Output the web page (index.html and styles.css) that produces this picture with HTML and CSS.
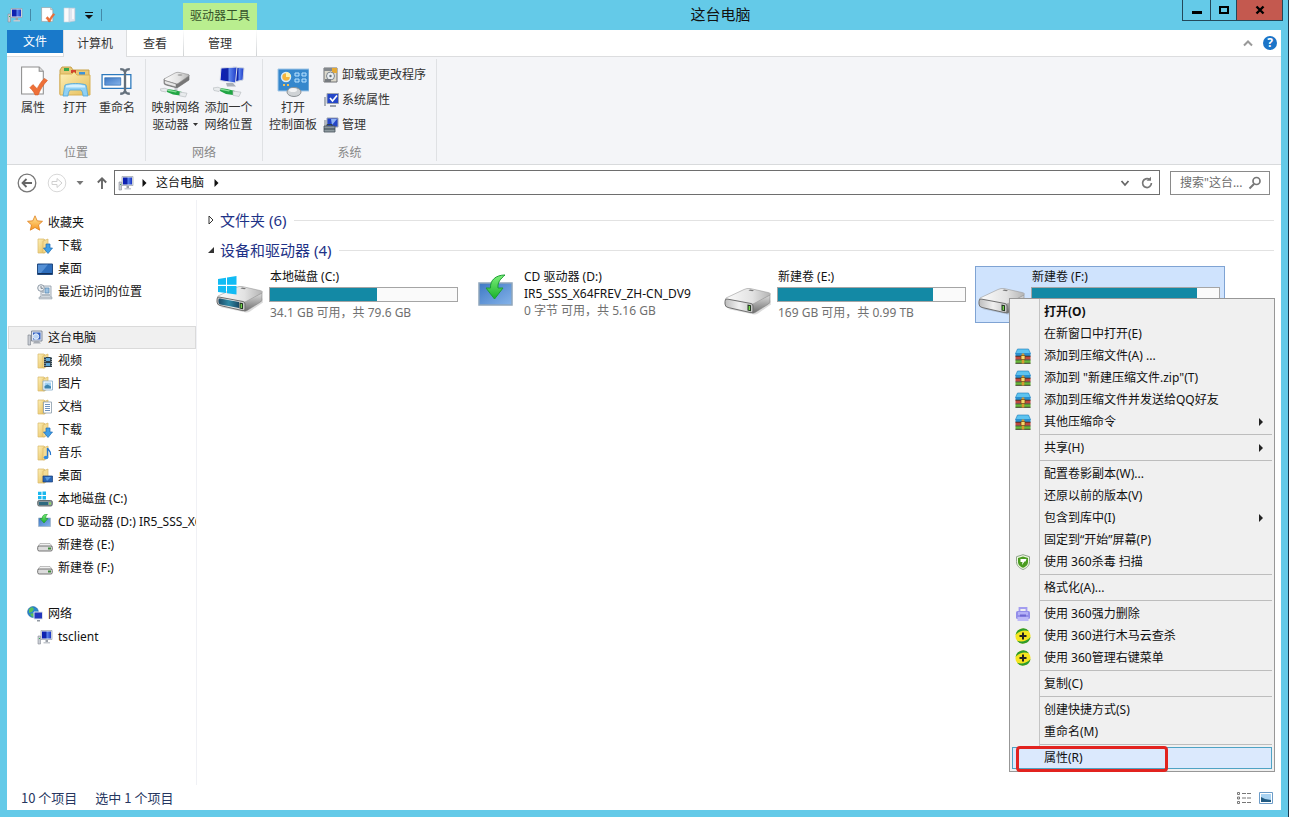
FILE: index.html
```html
<!DOCTYPE html>
<html lang="zh-CN">
<head>
<meta charset="utf-8">
<title>这台电脑</title>
<link rel="stylesheet" href="styles.css">
</head>
<body>
<svg class="sprite" aria-hidden="true">
  <defs>
    <linearGradient id="g-screen" x1="0" y1="0" x2="1" y2="0"><stop offset="0" stop-color="#0a1fb8"/><stop offset=".45" stop-color="#1024a8"/><stop offset=".55" stop-color="#5c86ee"/><stop offset="1" stop-color="#1a35c4"/></linearGradient>
    <linearGradient id="g-folder" x1="0" y1="0" x2="1" y2="1"><stop offset="0" stop-color="#fdf0b8"/><stop offset="1" stop-color="#e6bd58"/></linearGradient>
    <linearGradient id="g-metal" x1="0" y1="0" x2="1" y2="0"><stop offset="0" stop-color="#fbfbfb"/><stop offset=".6" stop-color="#e2e2e2"/><stop offset="1" stop-color="#b4b4b4"/></linearGradient>
    <linearGradient id="g-side" x1="0" y1="0" x2="0" y2="1"><stop offset="0" stop-color="#dcdcdc"/><stop offset="1" stop-color="#6e6e6e"/></linearGradient>
    <linearGradient id="g-face" x1="0" y1="0" x2="1" y2="0"><stop offset="0" stop-color="#bdbdbd"/><stop offset=".5" stop-color="#f0f0f0"/><stop offset="1" stop-color="#c4c4c4"/></linearGradient>
    <linearGradient id="g-glass" x1="0" y1="0" x2="1" y2="0"><stop offset="0" stop-color="#1c4a66"/><stop offset=".5" stop-color="#2f8aa6"/><stop offset="1" stop-color="#1c4a66"/></linearGradient>
    <linearGradient id="g-blue" x1="0" y1="0" x2="1" y2="1"><stop offset="0" stop-color="#3d78c4"/><stop offset="1" stop-color="#86b4ea"/></linearGradient>
    <linearGradient id="g-green" x1="0" y1="0" x2="0" y2="1"><stop offset="0" stop-color="#7df07a"/><stop offset="1" stop-color="#18b02a"/></linearGradient>
    <linearGradient id="g-star" x1="0" y1="0" x2="0" y2="1"><stop offset="0" stop-color="#ffe9a0"/><stop offset="1" stop-color="#f7941e"/></linearGradient>
  </defs>
  <symbol id="i-pc" viewBox="0 0 16 16"><path d="M1 7h2.500v8H1z" fill="#c9cdd4" stroke="#8a8f98" stroke-width=".6"/><path d="M2 9h1v1H2z" fill="#3aa655"/><path d="M4 1.500h11v9H4z" fill="#e4e7ec" stroke="#9aa0aa" stroke-width=".7"/><path d="M5 2.500h9v7H5z" fill="url(#g-screen)"/><path d="M8.500 11h2.500v2H8.500z" fill="#9aa0a8"/><path d="M6.500 13h6.500v1.500H6.500z" fill="#c4c8ce"/></symbol>
  <symbol id="i-thispc" viewBox="0 0 16 16"><path d="M1 5h2.500v10H1z" fill="#c9cdd4" stroke="#777d88" stroke-width=".6"/><path d="M4.500 1h10.500v10H4.500z" fill="#dfe7f3" stroke="#6d7685" stroke-width=".8"/><path d="M6 2.500h7.500v7H6z" fill="#315fc0"/><circle cx="9" cy="6.500" r="2.700" fill="#b9d3f4" stroke="#e8f1fc"/><path d="M6 13.500l1.500-2.500h4l2.500 2.500z" fill="#a6abb3"/></symbol>
  <symbol id="i-page" viewBox="0 0 26 30"><path d="M1 1h17l4 4v22H1z" fill="#fff" stroke="#8d8d8d"/><path d="M18 1v4h4" fill="#ddd" stroke="#8d8d8d"/><path d="M9 21l3-3 4 4c2-4 4-7 7-10l3 2c-4 4-7 9-9 14h-3c-1-3-3-5-5-7z" fill="#ee7038" stroke="#d75a22" stroke-width=".6"/></symbol>
  <symbol id="i-blankfolder" viewBox="0 0 14 16"><path d="M1 1h5l1 1v13H1z" fill="#fafafa" stroke="#c7d3df" stroke-width=".6"/><path d="M6 1h6v13l-6 1z" fill="#dfe5ee" stroke="#b8c8d6" stroke-width=".6"/><path d="M9 2h2v10H9z" fill="#f5f7fa"/></symbol>
  <symbol id="i-openfolder" viewBox="0 0 32 32"><path d="M1 4l2-3h9l2 3h16v24H1z" fill="#e8c877" stroke="#c9a24a"/><path d="M5 2h5v3H5z" fill="#3aa84a"/><path d="M12 4h5v3h-5z" fill="#d2452f"/><path d="M20 6h6v3h-6z" fill="#3e93d8"/><path d="M1 8h12l2-2 3 3h13v20H1z" fill="url(#g-folder)" stroke="#d8b157"/><path d="M4 30c1-4 1-8 2-11 4-2 17-2 21 0 1 3 1 7 2 11h-5c0-3-1-5-2-6H11c-1 1-2 3-2 6z" fill="#8fd0f4" stroke="#4ea6d8" stroke-width=".8"/><path d="M7 19.500c5-1.500 14-1.500 19 0v2H7z" fill="#d6f1fd"/></symbol>
  <symbol id="i-rename" viewBox="0 0 30 28"><path d="M1 7h27v13H1z" fill="#fff" stroke="#2c79bd" stroke-width="1.200"/><path d="M3.500 10h15v7h-15z" fill="url(#g-blue)" stroke="#2467ae" stroke-width=".6"/><path d="M18 2c3 0 4 1 4.500 2.500C23 3 24 2 27 2M18 25c3 0 4-1 4.500-2.500C23 24 24 25 27 25M22.500 4v19" fill="none" stroke="#64707c" stroke-width="2.200"/></symbol>
  <symbol id="i-mapdrive" viewBox="0 0 32 32"><path d="M4 13v4q0 1.500 2 2l11 3 12-8V9z" fill="#777" stroke="#666" stroke-width=".6"/><path d="M4 13L15 7q2-1 4-.6l9 2q2 .6.500 1.800L18 17.500q-1 .6-2 .3L5 14.500z" fill="url(#g-metal)" stroke="#888" stroke-width=".6"/><path d="M4.500 14.500L16 18v3L6 18.300q-1.500-.5-1.500-2z" fill="#e7e7e7" stroke="#777" stroke-width=".5"/><ellipse cx="20" cy="9" rx="2.500" ry=".8" fill="#999"/><path d="M16 22v3" stroke="#c4c8cc" stroke-width="3"/><path d="M7 23l7 1 8 2-2 3.500-7-1-6-2.500z" fill="#21a544"/><path d="M8 23.500l9 2-1 1-8-1.500z" fill="#83dd94"/><path d="M0 23l5-.8 3 1.300L6 26l-5-1zM20 26l7 1.200-1.500 3.800-6-1.200z" fill="#e8ebed" stroke="#b1b7bb" stroke-width=".6"/></symbol>
  <symbol id="i-addnet" viewBox="0 0 32 32"><path d="M20 1l11 1-1 12-9 2z" fill="url(#g-screen)" stroke="#cfd6e2"/><path d="M8 2l16-1-1.500 16L7 14.500z" fill="url(#g-screen)" stroke="#dde2ea"/><path d="M13 17h7l3 3.500h-9z" fill="#a9b0b8"/><path d="M7 22l7 1 8 2-2 4-7-1-6-3z" fill="#21a544"/><path d="M8 22.500l9 2-1 1-8-1.500z" fill="#83dd94"/><path d="M0 22l5-.8 3 1.300L6 25.500 1 24.500zM20 25l8 1.200-2 4.300-6-1.200z" fill="#e8ebed" stroke="#b1b7bb" stroke-width=".6"/></symbol>
  <symbol id="i-cpanel" viewBox="0 0 32 30"><path d="M1 2h31v22H1z" fill="#3587cc" stroke="#a3c7e7"/><circle cx="9" cy="10" r="4.500" fill="#f4b53c" stroke="#d3ebff" stroke-width="1.500"/><path d="M9 10V5a5 5 0 0 1 5 5z" fill="#fff2a8"/><path d="M18 6h4v3h-4zM25 6h4v3h-4zM18 12h4v3h-4zM25 12h4v3h-4z" fill="#3d8fd6" stroke="#b9e2ff"/><path d="M6 18h2M10 18h2" stroke="#f1bf55" stroke-width="2"/><ellipse cx="17" cy="25" rx="7" ry="4.500" fill="#cfd3d6" stroke="#8d9397"/><ellipse cx="16" cy="23" rx="4" ry="2" fill="#f2f3f4"/></symbol>
  <symbol id="i-uninstall" viewBox="0 0 16 16"><path d="M1 1h13v14H1z" fill="#dcd9cc" stroke="#6f7174"/><path d="M1 1h13v3H1z" fill="#83888d"/><path d="M9 1h5v5H9z" fill="#e4a936"/><circle cx="7.500" cy="9" r="4" fill="#e8edf1" stroke="#7d858d"/><circle cx="7.500" cy="9" r="1.200" fill="#66717b"/><path d="M2 12h6v3H2z" fill="#777b80"/></symbol>
  <symbol id="i-sysprop" viewBox="0 0 16 16"><path d="M1 5h2v9H1z" fill="#aab0b8"/><path d="M4 1.500h11.500v10H4z" fill="#2446c8" stroke="#9da4b0"/><path d="M7 6l2.500 3L14 3.500" fill="none" stroke="#fff" stroke-width="1.700"/><path d="M7 13h6v2H7z" fill="#9ba1a9"/></symbol>
  <symbol id="i-manage" viewBox="0 0 16 16"><path d="M4 1h11v9H4z" fill="#2446c8" stroke="#9da4b0"/><path d="M1 3h3v6H1z" fill="#b2b7bd"/><path d="M8 2h6L9 8z" fill="#8fb2f3"/><path d="M1 9h11v6H1z" fill="#8c989e" stroke="#46525a" stroke-width=".8"/><path d="M4 9V7.500h5V9M1 12h11" fill="none" stroke="#33434c"/></symbol>
  <symbol id="i-star" viewBox="0 0 16 16"><path d="M8 .8l2.200 5 5.300.5-4 3.600 1.200 5.300L8 12.500l-4.700 2.700 1.200-5.300-4-3.600 5.300-.5z" fill="url(#g-star)" stroke="#dd7d1d" stroke-width=".8"/></symbol>
  <symbol id="i-folder" viewBox="0 0 16 16"><path d="M1 1h6l1 1v13H1z" fill="url(#g-folder)" stroke="#d9b868" stroke-width=".7"/><path d="M6 3l5-2v12l-5 2z" fill="#f4dc94" stroke="#d9b868" stroke-width=".7"/></symbol>
  <symbol id="i-download" viewBox="0 0 16 16"><use href="#i-folder"/><path d="M9 6h4v4h2.500L11 15.500 6.500 10H9z" fill="#3f9fe6" stroke="#1d6cb4" stroke-width=".7"/></symbol>
  <symbol id="i-video" viewBox="0 0 16 16"><use href="#i-folder"/><path d="M7 4h8v10H7z" fill="#2e3f4a"/><path d="M9 5h4v3H9zM9 10h4v3H9z" fill="#5ea6d6"/><path d="M8 4v10M14.300 4v10" stroke="#d9e2e6" stroke-dasharray="1 1" stroke-width=".8"/></symbol>
  <symbol id="i-image" viewBox="0 0 16 16"><use href="#i-folder"/><path d="M6 5h9.500v9H6z" fill="#fff" stroke="#83a9c9" stroke-width=".8"/><path d="M7.500 6.500h6.500v6H7.500z" fill="#9fd0f2"/><path d="M7.500 10l3-1.500 3.500 2v2H7.500z" fill="#3c83ae"/></symbol>
  <symbol id="i-doc" viewBox="0 0 16 16"><use href="#i-folder"/><path d="M6.500 3h8v11h-8z" fill="#fff" stroke="#889aa9" stroke-width=".8"/><path d="M8 5.500h5M8 7.500h5M8 9.500h5M8 11.500h5" stroke="#6f93bf"/></symbol>
  <symbol id="i-music" viewBox="0 0 16 16"><use href="#i-folder"/><path d="M10.500 12V3c1 3 4 3 3 7" fill="none" stroke="#2476cf" stroke-width="1.400"/><ellipse cx="9" cy="12.500" rx="2.300" ry="1.800" fill="#2f8be2"/></symbol>
  <symbol id="i-deskfolder" viewBox="0 0 16 16"><use href="#i-folder"/><path d="M6 8h9.500v6H6z" fill="#2965b4" stroke="#173e78" stroke-width=".7"/><path d="M8 9h6l-4 4z" fill="#5598df"/></symbol>
  <symbol id="i-desktop" viewBox="0 0 16 16"><path d="M.5 3h15v10.500H.5z" fill="#2d6dbc" stroke="#234b80"/><path d="M1 4l10-.5L4 12H1z" fill="#5590d5"/><path d="M1 12.500h14" stroke="#14315a"/></symbol>
  <symbol id="i-recent" viewBox="0 0 16 16"><path d="M4 2h10v12H2.500L4 12z" fill="#e9edf1" stroke="#8a98a5" stroke-width=".8"/><path d="M8 4h4v5H8z" fill="#9cc2e3" stroke="#5585ae" stroke-width=".7"/><path d="M5 11h8M5 8h2" stroke="#7d8b98"/><circle cx="4" cy="4" r="3.300" fill="#eef1f4" stroke="#8d99a5"/><path d="M4 2v2.300h2" fill="none" stroke="#5c6873" stroke-width=".8"/><path d="M2 13h13v2H2z" fill="#cbd0d5" stroke="#8a98a5" stroke-width=".5"/></symbol>
  <symbol id="i-drive-s" viewBox="0 0 16 16"><path d="M.8 9.500L3 6.500h10l2.300 3z" fill="#f0f0f0" stroke="#999" stroke-width=".6"/><rect x=".7" y="9" width="14.600" height="5" rx="1.500" fill="#dcdcdc" stroke="#666" stroke-width=".9"/><path d="M11 10.500h3v2h-3z" fill="#3c8a3a"/></symbol>
  <symbol id="i-win-s" viewBox="0 0 16 16"><rect x=".7" y="9.500" width="14.600" height="5.500" rx="1.500" fill="#8b979c" stroke="#5b6468" stroke-width=".9"/><path d="M2 11h9v3H2z" fill="#2e6b80"/><path d="M12 11.500h2v2h-2z" fill="#8de05c"/><path d="M1 .8h3.500v3.200H1zM5.500.5H9v3.500H5.500zM1 5h3.500v3.200H1zM5.500 5H9v3.500H5.500z" fill="#1ab7ee"/></symbol>
  <symbol id="i-cd-s" viewBox="0 0 16 16"><path d="M1.500 4h12v8.500h-12z" fill="url(#g-blue)" stroke="#9fb3c7" stroke-width=".7"/><path d="M10.500 0C7 0 5 2 5.200 4.500H3L7 9l4-4.500H8.700C8.500 2.500 9.500 1 10.500 0z" fill="url(#g-green)" stroke="#1c9430" stroke-width=".6"/></symbol>
  <symbol id="i-network" viewBox="0 0 16 16"><circle cx="6" cy="6" r="5.400" fill="#2a86cf" stroke="#1a619f" stroke-width=".6"/><path d="M2 3l3-2 2 2-2 3-3 1zM3 8l3-1 1 3-2 1z" fill="#59c159"/><path d="M7 6h8.500v7H7z" fill="#2337bd" stroke="#dde2ea"/><path d="M10 14h3v1.500h-3z" fill="#939aa3"/></symbol>
  <symbol id="i-drive" viewBox="0 0 48 32"><path d="M4 24l26 5.500q2 .4 4-1l13-9-1-5z" fill="#000" opacity=".14"/><path d="M28 18l18-8v6.500q0 1.500-1.500 2.500L31 27.500q-2 1-3 .5z" fill="url(#g-side)" stroke="#777" stroke-width=".5"/><path d="M2 13L20 4.500q3-1.500 6-1l18 4q4 1 1.500 2.700L30 18.500q-2 1-4 .6L3 15.500q-2.500-1-1-2.500z" fill="url(#g-metal)" stroke="#9a9a9a" stroke-width=".6"/><path d="M3 14l24 4.500q2 .4 2 2.500v5q0 2-2 1.700L4 22.500q-3-.7-3-3.500v-2.500Q1 13.600 3 14z" fill="url(#g-face)" stroke="#6f6f6f" stroke-width="1"/><path d="M23.500 19.500l3.500.7v6l-3.500-.7z" fill="#21361f"/><path d="M25.300 21v4" stroke="#77e04d" stroke-width="1.300"/><path d="M26 4.500l4 .8-1.500 1-4-.8z" fill="#777"/></symbol>
  <symbol id="i-windrive" viewBox="0 0 48 40"><svg x="0" y="8" width="48" height="32" viewBox="0 0 48 32"><use href="#i-drive"/><path d="M4 15.500L23 19v6L4.500 21.500q-2-.5-2-2.500v-2q0-1.800 1.500-1.500z" fill="url(#g-glass)"/></svg><path d="M2 4l8-1.200v7H2zM11 2.600L20.500 1v8.800H11zM2 11h8v7l-8-1zM11 11h9.500v8.500L11 18.200z" fill="#12bbf4"/></symbol>
  <symbol id="i-cddrive" viewBox="0 0 36 32"><path d="M1 9h33v22H1z" fill="url(#g-blue)" stroke="#8fa5bb" stroke-width="1.500"/><path d="M27 1C18 1 12 6 12.500 14H8l8.500 11L25 14h-5c-.6-6 2.500-9 7-13z" fill="url(#g-green)" stroke="#1c9e33"/></symbol>
  <symbol id="i-rar" viewBox="0 0 16 16"><path d="M2.500 1h11l2 4.500H.5z" fill="#5cc3f0" stroke="#1b7bb8" stroke-width=".6"/><path d="M.5 5h15v3H.5z" fill="#2a8fce"/><path d="M.5 8h15v3.500H.5z" fill="#c0493c"/><path d="M.5 12h15v3.500H.5z" fill="#67b83a"/><path d="M.5 8.200h15M.5 11.800h15M.5 15.300h15" stroke="#3b3028" stroke-width=".9"/><path d="M6.700 5.500h2.600v10H6.700z" fill="#d89c31"/><path d="M6 7.500h4v4H6z" fill="#f8d86c" stroke="#6b4814" stroke-width=".7"/></symbol>
  <symbol id="i-shield" viewBox="0 0 16 16"><path d="M8 .7l6.500 2v5c0 4-3 6.500-6.500 7.800C4.500 14.200 1.500 11.700 1.500 7.700v-5z" fill="#eef8e2" stroke="#8fa38a"/><path d="M8 2.500l5 1.500v4c0 3-2.500 4.800-5 5.800C5.500 12.800 3 11 3 8V4z" fill="#4a9c20"/><path d="M5.500 5h6l-1 2.500h-1L7 11l.5-3h-2z" fill="#fff"/></symbol>
  <symbol id="i-shred" viewBox="0 0 16 16"><path d="M4.500 5V2h7v3" fill="none" stroke="#a39df0" stroke-width="1.800"/><rect x="1" y="5" width="14" height="8" rx="1.500" fill="#938ee9"/><path d="M3 6h10v3H3z" fill="#b4b0f7"/><path d="M2.500 11h11v4h-11z" fill="#bdb9f7"/><path d="M5 8.500h6v2H5z" fill="#6f67d2"/></symbol>
  <symbol id="i-360" viewBox="0 0 16 16"><circle cx="8" cy="8" r="7.600" fill="#f5e51f"/><path d="M.5 7A7.600 7.600 0 0 1 14 3.300C9 1.500 4 3 .5 7zM15.500 9A7.600 7.600 0 0 1 2 12.700c5 1.800 10 .3 13.500-3.700z" fill="#2d9b2d"/><path d="M8 4.500v7M4.500 8h7" stroke="#222" stroke-width="2"/></symbol>
</svg>

<div class="window">
  <header class="titlebar">
    <div class="quick">
      <svg class="i16"><use href="#i-pc"/></svg>
      <span class="quick-sep"></span>
      <button class="plain" aria-label="属性"><svg class="i16"><use href="#i-page"/></svg></button>
      <button class="plain" aria-label="新建文件夹"><svg class="i16"><use href="#i-blankfolder"/></svg></button>
      <button class="plain" aria-label="自定义快速访问工具栏"><svg class="i10" viewBox="0 0 10 10"><path d="M1 2.500h8" stroke="#111"/><path d="M1 5h8L5 9z" fill="#111"/></svg></button>
      <span class="quick-sep"></span>
    </div>
    <div class="context-title">驱动器工具</div>
    <h1 class="title">这台电脑</h1>
    <div class="controls">
      <button class="ctl ctl-min" aria-label="最小化"><svg class="i14" viewBox="0 0 14 14"><path d="M2 9.500h10" stroke="#000" stroke-width="3"/></svg></button>
      <button class="ctl ctl-max" aria-label="最大化"><svg class="i14" viewBox="0 0 14 14"><path d="M3 4h8v6H3z" fill="none" stroke="#000" stroke-width="2"/></svg></button>
      <button class="ctl ctl-close" aria-label="关闭"><svg class="i14" viewBox="0 0 14 14"><path d="M3.500 3.500l7 7M10.500 3.500l-7 7" stroke="#000" stroke-width="2.400"/></svg></button>
    </div>
  </header>

  <div class="client">
    <nav class="tabs" aria-label="功能区">
      <button class="tab tab-file">文件</button>
      <button class="tab tab-active">计算机</button>
      <button class="tab tab-view">查看</button>
      <button class="tab tab-manage">管理</button>
      <div class="tabs-end">
        <button class="plain" aria-label="折叠功能区"><svg class="i10" viewBox="0 0 10 10"><path d="M1 7.500l4-4 4 4" fill="none" stroke="#999" stroke-width="2"/></svg></button>
        <button class="plain help" aria-label="帮助">?</button>
      </div>
    </nav>

    <section class="ribbon">
      <div class="group group-location">
        <div class="group-body">
          <button class="big"><svg class="i32 pad"><use href="#i-page"/></svg><span>属性</span></button>
          <button class="big"><svg class="i32"><use href="#i-openfolder"/></svg><span>打开</span></button>
          <button class="big"><svg class="i32"><use href="#i-rename"/></svg><span>重命名</span></button>
        </div>
        <div class="group-name">位置</div>
      </div>
      <div class="group group-network">
        <div class="group-body">
          <button class="big"><svg class="i32"><use href="#i-mapdrive"/></svg><span>映射网络</span><span class="with-caret">驱动器<svg class="caret" viewBox="0 0 7 4"><path d="M1 0h5L3.500 3z" fill="#333"/></svg></span></button>
          <button class="big"><svg class="i32"><use href="#i-addnet"/></svg><span>添加一个</span><span>网络位置</span></button>
        </div>
        <div class="group-name">网络</div>
      </div>
      <div class="group group-system">
        <div class="group-body">
          <button class="big"><svg class="i32"><use href="#i-cpanel"/></svg><span>打开</span><span>控制面板</span></button>
          <div class="small-list">
            <button class="small"><svg class="i16"><use href="#i-uninstall"/></svg>卸载或更改程序</button>
            <button class="small"><svg class="i16"><use href="#i-sysprop"/></svg>系统属性</button>
            <button class="small"><svg class="i16"><use href="#i-manage"/></svg>管理</button>
          </div>
        </div>
        <div class="group-name">系统</div>
      </div>
    </section>

    <div class="navbar">
      <button class="plain" aria-label="后退"><svg class="i20" viewBox="0 0 20 20"><circle cx="10" cy="10" r="8.800" fill="none" stroke="#777" stroke-width="1.300"/><path d="M15 10H6M9.500 6L5.500 10l4 4" fill="none" stroke="#666" stroke-width="1.800"/></svg></button>
      <button class="plain forward" aria-label="前进"><svg class="i20" viewBox="0 0 20 20"><circle cx="10" cy="10" r="8.800" fill="none" stroke="#d8d8d8"/><path d="M5 8.500h5V5.500l5 4.500-5 4.500v-3H5z" fill="none" stroke="#d0d0d0"/></svg></button>
      <button class="plain history" aria-label="最近位置"><svg class="i10" viewBox="0 0 10 10"><path d="M1.500 3h7L5 7z" fill="#777"/></svg></button>
      <button class="plain up" aria-label="上移"><svg class="i14" viewBox="0 0 14 14"><path d="M7 13V3M2.800 6.500L7 2.300l4.200 4.200" fill="none" stroke="#666" stroke-width="1.900"/></svg></button>
      <div class="address">
        <svg class="i16"><use href="#i-pc"/></svg>
        <svg class="i10 crumb-arrow" viewBox="0 0 10 10"><path d="M3.500 1l4 4-4 4z" fill="#111"/></svg>
        <button class="plain crumb">这台电脑</button>
        <svg class="i10" viewBox="0 0 10 10"><path d="M3.500 1l4 4-4 4z" fill="#111"/></svg>
        <div class="address-end">
          <button class="plain" aria-label="展开地址"><svg class="i10" viewBox="0 0 10 10"><path d="M1.500 3L5 7l3.500-4" fill="none" stroke="#666" stroke-width="1.800"/></svg></button>
          <button class="plain" aria-label="刷新"><svg class="i14" viewBox="0 0 14 14"><path d="M9.500 3.500A4.400 4.400 0 1 0 11.400 7" fill="none" stroke="#777" stroke-width="1.700"/><path d="M6.500 4.800h4.500V.8z" fill="#777"/></svg></button>
        </div>
      </div>
      <label class="search"><input type="text" placeholder="搜索&quot;这台..." aria-label="搜索这台电脑"><svg class="i14" viewBox="0 0 14 14"><circle cx="8.500" cy="5" r="3.500" fill="none" stroke="#777" stroke-width="1.700"/><path d="M6 8L1.500 12.500" stroke="#777" stroke-width="2"/></svg></label>
    </div>

    <div class="panes">
      <nav class="tree" aria-label="导航窗格">
        <ul>
          <li class="root"><svg class="i16"><use href="#i-star"/></svg>收藏夹</li>
          <li><svg class="i16"><use href="#i-download"/></svg>下载</li>
          <li><svg class="i16"><use href="#i-desktop"/></svg>桌面</li>
          <li><svg class="i16"><use href="#i-recent"/></svg>最近访问的位置</li>
        </ul>
        <ul>
          <li class="root current"><svg class="i16"><use href="#i-thispc"/></svg>这台电脑</li>
          <li><svg class="i16"><use href="#i-video"/></svg>视频</li>
          <li><svg class="i16"><use href="#i-image"/></svg>图片</li>
          <li><svg class="i16"><use href="#i-doc"/></svg>文档</li>
          <li><svg class="i16"><use href="#i-download"/></svg>下载</li>
          <li><svg class="i16"><use href="#i-music"/></svg>音乐</li>
          <li><svg class="i16"><use href="#i-deskfolder"/></svg>桌面</li>
          <li><svg class="i16"><use href="#i-win-s"/></svg>本地磁盘 (C:)</li>
          <li><svg class="i16"><use href="#i-cd-s"/></svg>CD 驱动器 (D:) IR5_SSS_X64FREV_ZH-CN_DV9</li>
          <li><svg class="i16"><use href="#i-drive-s"/></svg>新建卷 (E:)</li>
          <li><svg class="i16"><use href="#i-drive-s"/></svg>新建卷 (F:)</li>
        </ul>
        <ul>
          <li class="root"><svg class="i16"><use href="#i-network"/></svg>网络</li>
          <li><svg class="i16"><use href="#i-pc"/></svg>tsclient</li>
        </ul>
      </nav>

      <main class="content">
        <h2 class="section"><svg class="i10" viewBox="0 0 10 10"><path d="M3 1l4 4-4 4z" fill="#fff" stroke="#333"/></svg>文件夹 (6)</h2>
        <h2 class="section"><svg class="i10" viewBox="0 0 10 10"><path d="M8 2v6H2z" fill="#333"/></svg>设备和驱动器 (4)</h2>
        <ul class="tiles">
          <li class="tile">
            <svg class="tile-icon"><use href="#i-windrive"/></svg>
            <div class="tile-info"><span>本地磁盘 (C:)</span><div class="bar"><div class="fill" style="width:57%"></div></div><span class="free">34.1 GB 可用，共 79.6 GB</span></div>
          </li>
          <li class="tile">
            <svg class="tile-icon tile-icon-cd"><use href="#i-cddrive"/></svg>
            <div class="tile-info"><span>CD 驱动器 (D:)</span><span>IR5_SSS_X64FREV_ZH-CN_DV9</span><span class="free">0 字节 可用，共 5.16 GB</span></div>
          </li>
          <li class="tile">
            <svg class="tile-icon tile-icon-hd"><use href="#i-drive"/></svg>
            <div class="tile-info"><span>新建卷 (E:)</span><div class="bar"><div class="fill" style="width:83%"></div></div><span class="free">169 GB 可用，共 0.99 TB</span></div>
          </li>
          <li class="tile selected">
            <svg class="tile-icon tile-icon-hd"><use href="#i-drive"/></svg>
            <div class="tile-info"><span>新建卷 (F:)</span><div class="bar"><div class="fill" style="width:88%"></div></div></div>
            <div class="menu" role="menu">
              <button class="item default" role="menuitem">打开(O)</button>
              <button class="item" role="menuitem">在新窗口中打开(E)</button>
              <button class="item" role="menuitem"><svg class="i16"><use href="#i-rar"/></svg>添加到压缩文件(A) ...</button>
              <button class="item" role="menuitem"><svg class="i16"><use href="#i-rar"/></svg>添加到 "新建压缩文件.zip"(T)</button>
              <button class="item" role="menuitem"><svg class="i16"><use href="#i-rar"/></svg>添加到压缩文件并发送给QQ好友</button>
              <button class="item more" role="menuitem"><svg class="i16"><use href="#i-rar"/></svg>其他压缩命令</button>
              <hr>
              <button class="item more" role="menuitem">共享(H)</button>
              <hr>
              <button class="item" role="menuitem">配置卷影副本(W)...</button>
              <button class="item" role="menuitem">还原以前的版本(V)</button>
              <button class="item more" role="menuitem">包含到库中(I)</button>
              <button class="item" role="menuitem">固定到“开始”屏幕(P)</button>
              <button class="item" role="menuitem"><svg class="i16"><use href="#i-shield"/></svg>使用 360杀毒 扫描</button>
              <hr>
              <button class="item" role="menuitem">格式化(A)...</button>
              <hr>
              <button class="item" role="menuitem"><svg class="i16"><use href="#i-shred"/></svg>使用 360强力删除</button>
              <button class="item" role="menuitem"><svg class="i16"><use href="#i-360"/></svg>使用 360进行木马云查杀</button>
              <button class="item" role="menuitem"><svg class="i16"><use href="#i-360"/></svg>使用 360管理右键菜单</button>
              <hr>
              <button class="item" role="menuitem">复制(C)</button>
              <hr>
              <button class="item" role="menuitem">创建快捷方式(S)</button>
              <button class="item" role="menuitem">重命名(M)</button>
              <hr>
              <button class="item hot" role="menuitem">属性(R)<span class="marker"></span></button>
            </div>
          </li>
        </ul>
      </main>
    </div>

    <footer class="status">
      <span>10 个项目</span>
      <span>选中 1 个项目</span>
      <div class="views">
        <button class="plain" aria-label="详细信息"><svg class="i16" viewBox="0 0 16 16"><path d="M1.500 2.500h2v2h-2zM1.500 7h2v2h-2zM1.500 11.500h2v2h-2z" fill="#fff" stroke="#777"/><path d="M6 3.500h4M11 3.500h4M6 8h4M11 8h4M6 12.500h4M11 12.500h4" stroke="#777"/></svg></button>
        <button class="plain" aria-label="大图标"><svg class="i16" viewBox="0 0 16 16"><path d="M1.500 2.500h13v11h-13z" fill="#fff" stroke="#6c9cc8"/><path d="M3 4h10v8H3z" fill="#a9d3f2"/><path d="M3 7l4 2 6 1v2H3z" fill="#225b82"/></svg></button>
      </div>
    </footer>
  </div>
</div>
</body>
</html>
```
FILE: styles.css
```css
* { box-sizing: border-box; }

body {
  margin: 0;
  background: #64cae8;
  color: #111;
  font-family: "Noto Sans", "Noto Sans CJK SC", sans-serif;
  font-size: 12px;
  line-height: 18px;
}

ul { list-style: none; margin: 0; padding: 0; }
h1, h2 { margin: 0; font-weight: 400; }
svg { display: block; flex: none; }
button { font: inherit; color: inherit; border: 0; padding: 0; background: none; white-space: nowrap; }

.sprite { position: absolute; width: 0; height: 0; }
.i10 { width: 10px; height: 10px; }
.i14 { width: 14px; height: 14px; }
.i16 { width: 16px; height: 16px; }
.i20 { width: 20px; height: 20px; }
.i32 { width: 32px; height: 32px; }
.i32.pad { padding: 0 0 1px 2px; }

.window {
  display: flex;
  flex-direction: column;
  height: 100vh;
  padding: 0 7px 7px;
  border-right: 1px solid #1c3a50;
}

/* Title bar */
.titlebar { display: flex; height: 30px; }
.quick { display: flex; align-items: center; gap: 6px; width: 176px; }
.quick-sep { width: 1px; height: 12px; margin: 0 3px 0 1px; background: #4489a8; }
.context-title {
  width: 74px;
  margin-top: 3px;
  background: #b9ee8f;
  color: #35522a;
  line-height: 26px;
  text-align: center;
}
.title { flex: 1; padding-left: 2px; font-size: 15px; line-height: 28px; text-align: center; }
.controls { display: flex; width: 101px; height: 21px; margin-right: -2px; border: 1px solid #23485a; border-top: 0; }
.ctl { display: flex; align-items: center; justify-content: center; border-right: 1px solid #23485a; }
.ctl-min { width: 28px; }
.ctl-max { width: 26px; }
.ctl-close { flex: 1; border-right: 0; background: #c4594f; }

.client { display: flex; flex: 1; flex-direction: column; min-height: 0; background: #fff; }

/* Ribbon */
.tabs { display: flex; height: 27px; border-bottom: 1px solid #dcdddf; color: #333; }
.tab { line-height: 25px; }
.tab-file { width: 56px; height: 23px; background: #1979ca; color: #fff; line-height: 23px; }
.tab-active { width: 64px; height: 27px; background: #f4f5f8; border: solid #dcdddf; border-width: 0 1px; }
.tab-view { width: 56px; }
.tab-manage {
  width: 74px;
  border: 1px solid;
  border-width: 0 1px;
  border-image: linear-gradient(#ffffff, #cfd2d4) 1;
}
.tabs-end { display: flex; align-items: center; gap: 10px; margin-left: auto; padding-right: 4px; }
.help { width: 14px; height: 14px; border-radius: 50%; background: #1b74c8; color: #fff; font-weight: 700; line-height: 14px; }

.ribbon { display: flex; height: 108px; background: #f4f5f8; border-bottom: 1px solid #d8dadc; color: #333; }
.group { display: flex; flex-direction: column; margin: 2px 0 3px; border-right: 1px solid #dfe1e4; }
.group-body { display: flex; flex: 1; padding-top: 7px; }
.group-name { height: 17px; color: #888; text-align: center; }
.group-location { width: 139px; }
.group-location .group-body { padding-left: 5px; }
.group-network { width: 117px; }
.group-network .group-body { padding-left: 3px; }
.group-system { width: 174px; }
.group-system .group-body { padding-left: 5px; }
.big { display: flex; flex-direction: column; align-items: center; width: 42px; line-height: 17px; }
.big .i32 { margin-bottom: 1px; }
.group-network .big { width: 53px; }
.group-system .big { width: 50px; }
.with-caret { display: flex; align-items: center; gap: 3px; }
.caret { width: 7px; height: 4px; }
.small-list { display: flex; flex-direction: column; gap: 7px; padding-left: 5px; }
.small { display: flex; align-items: center; gap: 3px; }

/* Address row */
.navbar { display: flex; align-items: center; height: 35px; padding: 0 11px 0 10px; }
.forward { margin-left: 10px; }
.history { margin-left: 8px; }
.up { margin: 0 5px 0 10px; }
.address { display: flex; flex: 1; align-items: center; height: 25px; padding: 0 5px 0 3px; border: 1px solid #6e6e6e; }
.crumb-arrow { margin: 0 7px 0 5px; }
.crumb { margin-right: 7px; }
.address-end { display: flex; align-items: center; gap: 10px; margin-left: auto; }
.search { display: flex; align-items: center; width: 100px; height: 24px; margin-left: 10px; padding: 0 7px 0 9px; border: 1px solid #8a8a8a; }
.search input { flex: 1; min-width: 0; padding: 0; border: 0; outline: 0; background: none; font: inherit; }
.search input::placeholder { color: #6d6d6d; opacity: 1; }

/* Navigation tree */
.panes { display: flex; flex: 1; min-height: 0; }
.tree { width: 190px; padding: 11px 0 0 1px; border-right: 1px solid #f0f1f5; }
.tree ul { margin-bottom: 23px; }
.tree li { display: flex; align-items: center; gap: 5px; height: 23px; padding-left: 29px; overflow: hidden; white-space: nowrap; }
.tree .root { padding-left: 19px; }
.tree .current { padding-left: 18px; background: #f0f0f0; border: 1px solid #dadada; }

/* Drive list */
.content { flex: 1; padding: 5px 7px 0 9px; }
.section { display: flex; align-items: center; gap: 4px; height: 30px; color: #1e3287; font-size: 15px; }
.section::after { content: ""; flex: 1; height: 1px; margin-left: 4px; background: #e2e2e2; }
.tiles { display: flex; gap: 4px; padding: 1px 0 0 7px; }
.tile { position: relative; display: flex; width: 250px; height: 57px; border: 1px solid transparent; }
.tile.selected { background: #cfe3fd; border-color: #7fa3d3; }
.tile-icon { width: 48px; height: 40px; margin: 8px 5px 0 2px; }
.tile-icon-cd { width: 36px; height: 32px; margin: 7px 9px 0 10px; }
.tile-icon-hd { height: 32px; margin-top: 18px; }
.tile-info { display: flex; flex-direction: column; width: 189px; padding-top: 1px; white-space: nowrap; }
.tile-info span { height: 17px; padding-left: 1px; }
.bar { height: 15px; margin: 2px 0; border: 1px solid #a5a5a5; background: #fafafa; }
.fill { height: 100%; background: #1389a5; }
.free { color: #707070; }

/* Context menu */
.menu {
  position: absolute;
  z-index: 1;
  top: 31px;
  left: 33px;
  width: 266px;
  padding: 2px;
  border: 1px solid #979797;
  background: linear-gradient(#c4c4c4, #c4c4c4) 29px 0 / 1px 100% no-repeat #f0f0f0;
}
.item { position: relative; display: flex; align-items: center; width: 100%; height: 22px; padding-left: 32px; }
.item .i16 { margin: 0 13px 0 -29px; }
.default { font-weight: 700; }
.more::after { content: ""; margin: 0 9px 0 auto; border: solid transparent; border-width: 4px 0 4px 4px; border-left-color: #222; }
.menu hr { height: 1px; margin: 1px 0 2px 28px; border: 0; background: #bdbdbd; }
.hot { background: #dbe9fd; box-shadow: inset 0 0 0 1px #4fa3c4; }
.marker { position: absolute; top: -1px; left: 4px; width: 152px; height: 26px; border: 3px solid #e2231f; border-radius: 4px; }

/* Status bar */
.status {
  display: flex;
  align-items: center;
  gap: 18px;
  height: 25px;
  padding: 0 7px 0 14px;
  color: #26365f;
  font-family: "Noto Sans CJK SC", sans-serif;
  font-size: 13px;
}
.views { display: flex; gap: 6px; margin-left: auto; }
```
